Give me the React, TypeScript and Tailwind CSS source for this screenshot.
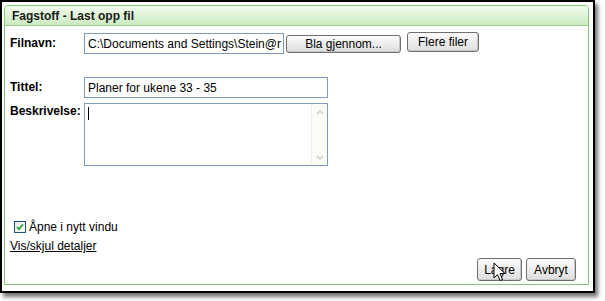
import React from "react";

const font = { fontFamily: '"Liberation Sans", Arial, sans-serif' };

function Btn({ children, className = "" }: { children: React.ReactNode; className?: string }) {
  return (
    <div
      className={`flex items-center justify-center rounded-[3px] border border-[#707070] bg-gradient-to-b from-[#fbfbfb] to-[#dedede] text-[12px] text-black shadow-[inset_-1px_-1px_0_#c8c8c8] ${className}`}
    >
      {children}
    </div>
  );
}

export default function App() {
  return (
    <div className="w-[605px] h-[301px] bg-white" style={font}>
      <div className="relative w-[595px] h-[293px] border-2 border-black bg-white pl-[2px] pt-[3px] pr-[4px] pb-[6px] shadow-[3px_4px_4px_rgba(0,0,0,0.55)]">
        <div className="flex h-full flex-col rounded-t-[4px] border border-[#86c77c] bg-white">
          <div className="flex h-[20px] items-center rounded-t-[3px] border-b border-[#9ad190] bg-gradient-to-b from-[#f3fbef] to-[#cbeac0] pl-[7px] text-[12px] font-bold text-[#1a1a1a]">
            Fagstoff - Last opp fil
          </div>
          <div className="flex flex-1 flex-col pl-[5px] pr-[12px]">
            {/* Filnavn row */}
            <div className="mt-[7px] flex items-start">
              <div className="w-[74px] pt-[3px] text-[12px] font-bold leading-[14px]">Filnavn:</div>
              <div className="flex h-[21px] w-[200px] items-center overflow-hidden whitespace-nowrap border border-[#7f9db9] pl-[3px] text-[12px]">
                C:\Documents and Settings\Stein@r
              </div>
              <Btn className="ml-[2px] mt-[2px] h-[18px] w-[115px]">Bla gjennom...</Btn>
              <Btn className="ml-[6px] mt-[-1px] h-[20px] w-[72px]">Flere filer</Btn>
            </div>
            {/* Tittel */}
            <div className="mt-[23px] flex items-start">
              <div className="w-[74px] pt-[3px] text-[12px] font-bold leading-[14px]">Tittel:</div>
              <div className="flex h-[21px] w-[244px] items-center border border-[#7f9db9] pl-[3px] text-[12px]">
                Planer for ukene 33 - 35
              </div>
            </div>
            {/* Beskrivelse */}
            <div className="mt-[5px] flex items-start">
              <div className="w-[74px] pt-[1px] text-[12px] font-bold leading-[14px]">Beskrivelse:</div>
              <div className="flex h-[63px] w-[244px] border border-[#7f9db9]">
                <div className="flex-1 pl-[3px] pt-[3px]">
                  <div className="h-[13px] w-px bg-black" />
                </div>
                <div className="flex w-[16px] flex-col justify-between bg-[#fbfbf8] border-l border-[#eeeeea]">
                  <div className="flex h-[16px] items-center justify-center">
                    <svg width="8" height="5" viewBox="0 0 8 5">
                      <path d="M1 4 L4 1 L7 4" fill="none" stroke="#c8c8c8" strokeWidth="1.3" />
                    </svg>
                  </div>
                  <div className="flex h-[16px] items-center justify-center">
                    <svg width="8" height="5" viewBox="0 0 8 5">
                      <path d="M1 1 L4 4 L7 1" fill="none" stroke="#c8c8c8" strokeWidth="1.3" />
                    </svg>
                  </div>
                </div>
              </div>
            </div>
            {/* checkbox */}
            <div className="mt-[54px] flex items-center pl-[4px]">
              <div className="flex h-[12px] w-[12px] items-center justify-center border border-[#1c5180] bg-gradient-to-br from-[#e6e6e0] to-white">
                <svg width="8" height="8" viewBox="0 0 8 8">
                  <path d="M1 4 L3 6.2 L7 1.5" fill="none" stroke="#21a121" strokeWidth="1.7" />
                </svg>
              </div>
              <span className="ml-[3px] text-[12px] leading-[14px]">Åpne i nytt vindu</span>
            </div>
            <div className="mt-[5px] text-[12px] leading-[14px] underline">Vis/skjul detaljer</div>
            {/* buttons */}
            <div className="mt-auto mb-[3px] flex justify-end gap-[4px]">
              <Btn className="h-[23px] w-[45px]">Lagre</Btn>
              <Btn className="h-[23px] w-[50px]">Avbryt</Btn>
            </div>
          </div>
        </div>
        {/* mouse cursor */}
        <svg className="absolute left-[491px] top-[260px]" width="13" height="21" viewBox="0 0 13 21">
          <path d="M1 1 L1 16 L4.5 12.5 L7 18.5 L9.5 17.5 L7 11.5 L12 11.5 Z" fill="white" stroke="black" strokeWidth="1" strokeLinejoin="round" />
        </svg>
      </div>
    </div>
  );
}
